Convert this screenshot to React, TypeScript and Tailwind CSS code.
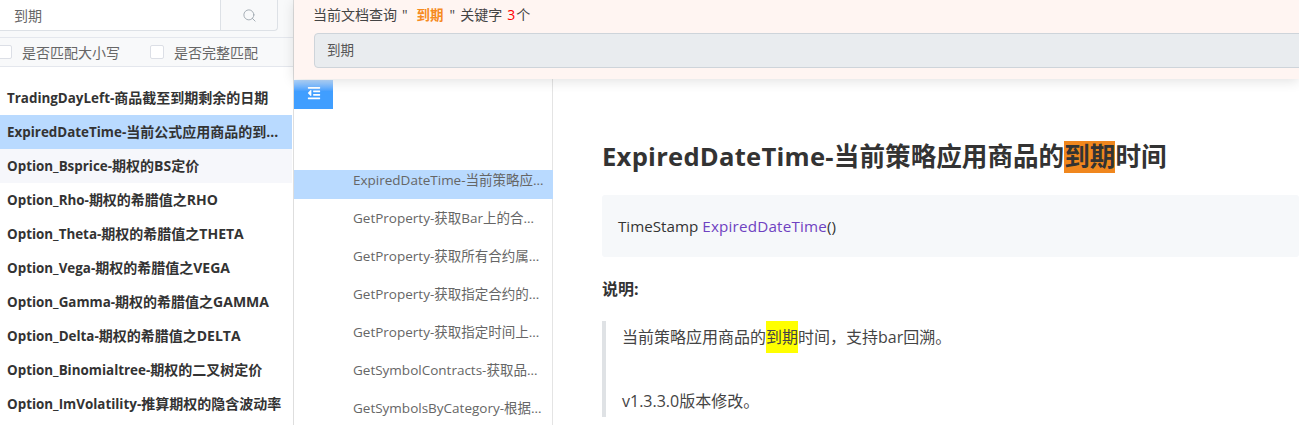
import { Search } from "lucide-react";
import { FaOutdent } from "react-icons/fa";

const results = [
  ["TradingDayLeft-", "商品截至到期剩余的日期"],
  ["ExpiredDateTime-", "当前公式应用商品的到期时间"],
  ["Option_Bsprice-", "期权的BS定价"],
  ["Option_Rho-", "期权的希腊值之RHO"],
  ["Option_Theta-", "期权的希腊值之THETA"],
  ["Option_Vega-", "期权的希腊值之VEGA"],
  ["Option_Gamma-", "期权的希腊值之GAMMA"],
  ["Option_Delta-", "期权的希腊值之DELTA"],
  ["Option_Binomialtree-", "期权的二叉树定价"],
  ["Option_ImVolatility-", "推算期权的隐含波动率"],
];

const docs = [
  "ExpiredDateTime-当前策略应用商品的到期时间",
  "GetProperty-获取Bar上的合约属性值",
  "GetProperty-获取所有合约属性值列表",
  "GetProperty-获取指定合约的属性值",
  "GetProperty-获取指定时间上的合约属性",
  "GetSymbolContracts-获取品种的合约列表",
  "GetSymbolsByCategory-根据分类获取品种",
];

function Check({ label }: { label: string }) {
  return (
    <label className="flex items-center gap-[10px] text-[14px] text-[#666]">
      <span className="w-[14px] h-[14px] bg-white border border-[#dcdfe6] rounded-[2px]" />
      {label}
    </label>
  );
}

export default function App() {
  return (
    <div className="h-[425px] w-[1299px] overflow-hidden flex bg-white text-[#333] font-['Open_Sans','Noto_Sans_CJK_SC',sans-serif]">
      {/* Search panel */}
      <div className="w-[294px] shrink-0 border-r border-[#dedede] flex flex-col">
        <div className="h-[38px] shrink-0 bg-[#f8f9fa] border-b border-[#e4e7ed] pr-[15px]">
          <div className="h-[31px] flex">
            <div className="flex-1 bg-white border-b border-[#dde1e6] pl-[14px] flex items-center text-[14px] text-[#666]">
              到期
            </div>
            <div className="w-[58px] border-l border-r border-b border-[#dde1e6] rounded-br-[4px] bg-[#f8f9fa] flex items-center justify-center">
              <Search size={15} strokeWidth={1.4} className="text-[#9aa3ab]" />
            </div>
          </div>
        </div>
        <div className="h-[29px] shrink-0 bg-[#f8f9fa] border-b border-[#e4e7ed] -ml-[2px] flex items-center gap-[30px]">
          <Check label="是否匹配大小写" />
          <Check label="是否完整匹配" />
        </div>
        <div className="pt-[14px] pr-px flex flex-col">
          {results.map(([name, desc], i) => (
            <div
              key={name}
              className={`h-[34px] shrink-0 pl-[7px] pr-[7px] leading-[34px] text-[14px] font-bold truncate ${
                i === 1 ? "bg-[#b9daff]" : i === 2 ? "bg-[#f6f7fb]" : ""
              }`}
            >
              <span className="text-[13.4px]">{name}</span>
              {desc}
            </div>
          ))}
        </div>
      </div>

      {/* Right side */}
      <div className="flex-1 min-w-0 flex flex-col relative">
        <div className="relative z-10 h-[79px] shrink-0 bg-[#fff5f2] pl-[20px] pt-[5px] shadow-[0_2px_12px_rgba(0,0,0,0.12)] overflow-hidden">
          <div className="h-[20px] leading-[20px] text-[14px] text-[#444] whitespace-pre flex">
            <span className="-ml-px">当前文档查询</span>
            <span className="ml-[5px]">"</span>
            <span className="ml-[9px] text-[13.5px] text-[#f68b1f] font-bold">到期</span>
            <span className="ml-[6px]">"</span>
            <span className="ml-[5px]">关键字</span>
            <span className="ml-[5px] text-[#f00]">3</span>
            <span className="ml-px">个</span>
          </div>
          <div className="mt-[8px] h-[35px] w-[1100px] bg-[#e9ecef] border border-[#ced4da] rounded-[4px] pl-[12px] flex items-center text-[13.5px] text-[#555]">
            到期
          </div>
        </div>

        <div className="flex-1 min-h-0 flex">
          {/* Doc nav */}
          <div className="relative w-[259px] shrink-0 border-r border-[#e4e4e4] pt-[91px]">
            <button className="absolute left-0 top-[1px] w-[39px] h-[29px] pb-[3px] bg-linear-to-b from-[#b4d8ff] via-[#409eff] via-40% to-[#409eff] flex items-center justify-center text-white">
              <FaOutdent size={14} />
            </button>
            {docs.map((d, i) => (
              <div
                key={d}
                className={`h-[29px] mb-[9px] -mr-px pl-[59px] pr-[8px] leading-[21px] text-[13.5px] text-[#666] truncate ${
                  i === 0 ? "bg-[#b9daff]" : ""
                }`}
              >
                {d}
              </div>
            ))}
          </div>

          {/* Article */}
          <div className="flex-1 min-w-0 pl-[49px] pt-[59px]">
            <h1 className="text-[25.6px] leading-[38px] font-bold whitespace-nowrap">
              <span className="tracking-[0.25px]">ExpiredDateTime-</span>当前策略应用商品的
              <span className="inline-block h-[32px] leading-[32px] align-top mt-[3px] bg-[#f0871e]">到期</span>时间
            </h1>
            <pre className="mt-[19px] h-[62px] bg-[#f6f8fa] rounded-[3px] pl-[16px] flex items-center text-[15.2px] font-['Open_Sans','Noto_Sans_CJK_SC',sans-serif]">
              <span>
                TimeStamp <span className="text-[#6f42c1] tracking-[0.2px]">ExpiredDateTime</span>()
              </span>
            </pre>
            <p className="mt-[21px] text-[16px] leading-[22px] font-bold">说明:</p>
            <blockquote className="mt-[21px] border-l-4 border-[#dfe2e5] pl-[16px] text-[16px] leading-[32px] text-[#444]">
              <div>
                当前策略应用商品的<span className="inline-block h-[32px] align-top bg-[#ffff00]">到期</span>时间，支持bar回溯。
              </div>
              <div className="h-[32px]" />
              <div>v1.3.3.0版本修改。</div>
            </blockquote>
          </div>
        </div>
      </div>
    </div>
  );
}
